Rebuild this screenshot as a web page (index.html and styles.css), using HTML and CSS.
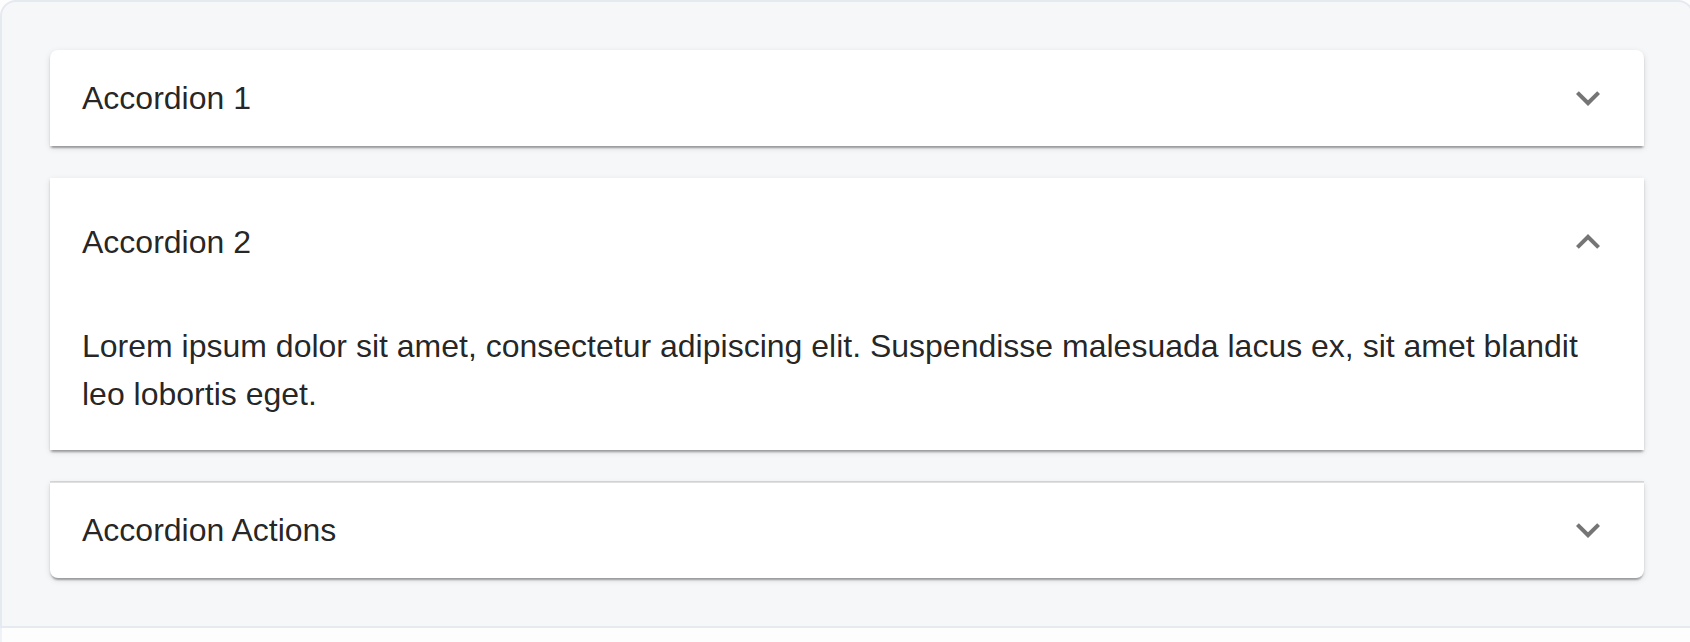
FILE: index.html
```html
<!DOCTYPE html>
<html lang="en">
<head>
<meta charset="utf-8">
<title>Accordion</title>
<link rel="stylesheet" href="styles.css">
</head>
<body>
<div class="demo">
  <div class="accordion first">
    <div class="summary">
      <span class="title">Accordion 1</span>
      <span class="icon"><svg viewBox="0 0 24 24" width="48" height="48"><path d="M16.59 8.59 12 13.17 7.41 8.59 6 10l6 6 6-6z"/></svg></span>
    </div>
  </div>
  <div class="accordion expanded">
    <div class="summary">
      <span class="title">Accordion 2</span>
      <span class="icon up"><svg viewBox="0 0 24 24" width="48" height="48"><path d="M16.59 8.59 12 13.17 7.41 8.59 6 10l6 6 6-6z"/></svg></span>
    </div>
    <div class="details">Lorem ipsum dolor sit amet, consectetur adipiscing elit. Suspendisse malesuada lacus ex, sit amet blandit leo lobortis eget.</div>
  </div>
  <div class="accordion last divided">
    <div class="summary">
      <span class="title">Accordion Actions</span>
      <span class="icon"><svg viewBox="0 0 24 24" width="48" height="48"><path d="M16.59 8.59 12 13.17 7.41 8.59 6 10l6 6 6-6z"/></svg></span>
    </div>
  </div>
</div>
<div class="code"></div>
</body>
</html>
```
FILE: styles.css
```css
html, body {
  margin: 0;
  padding: 0;
  overflow: hidden;
  background: #fdfdfe;
}
body {
  font-family: "Liberation Sans", Arial, sans-serif;
  color: rgba(0, 0, 0, 0.87);
  width: 1690px;
  height: 642px;
}
.demo {
  box-sizing: border-box;
  width: 1694px;
  background: #f6f7f9;
  border: 2px solid #e5e9f0;
  border-radius: 16px 16px 0 0;
  padding: 48px;
  display: flex;
  flex-direction: column;
}
.code {
  box-sizing: border-box;
  width: 1694px;
  height: 40px;
  border-left: 2px solid #eef1f5;
  background: #fdfdfe;
}
.accordion {
  position: relative;
  background: #fff;
  box-shadow: 0 4px 2px -2px rgba(0,0,0,0.2), 0 2px 2px 0 rgba(0,0,0,0.14), 0 2px 6px 0 rgba(0,0,0,0.12);
}
.accordion.first { border-radius: 8px 8px 0 0; }
.accordion.last { border-radius: 0 0 8px 8px; }
.accordion.expanded { margin: 32px 0; }
.accordion.divided::before {
  content: "";
  position: absolute;
  left: 0;
  right: 0;
  top: -1px;
  height: 2px;
  background: rgba(0, 0, 0, 0.12);
}
.summary {
  display: flex;
  align-items: center;
  padding: 0 32px;
  min-height: 96px;
}
.expanded .summary { min-height: 128px; }
.title {
  flex: 1;
  font-size: 32px;
  line-height: 48px;
  margin: 24px 0;
}
.expanded .title { margin: 40px 0; }
.icon {
  display: flex;
  width: 48px;
  height: 48px;
  fill: rgba(0, 0, 0, 0.54);
}
.icon.up { transform: rotate(180deg); }
.details {
  padding: 16px 32px 32px;
  font-size: 32px;
  line-height: 48px;
}
```
